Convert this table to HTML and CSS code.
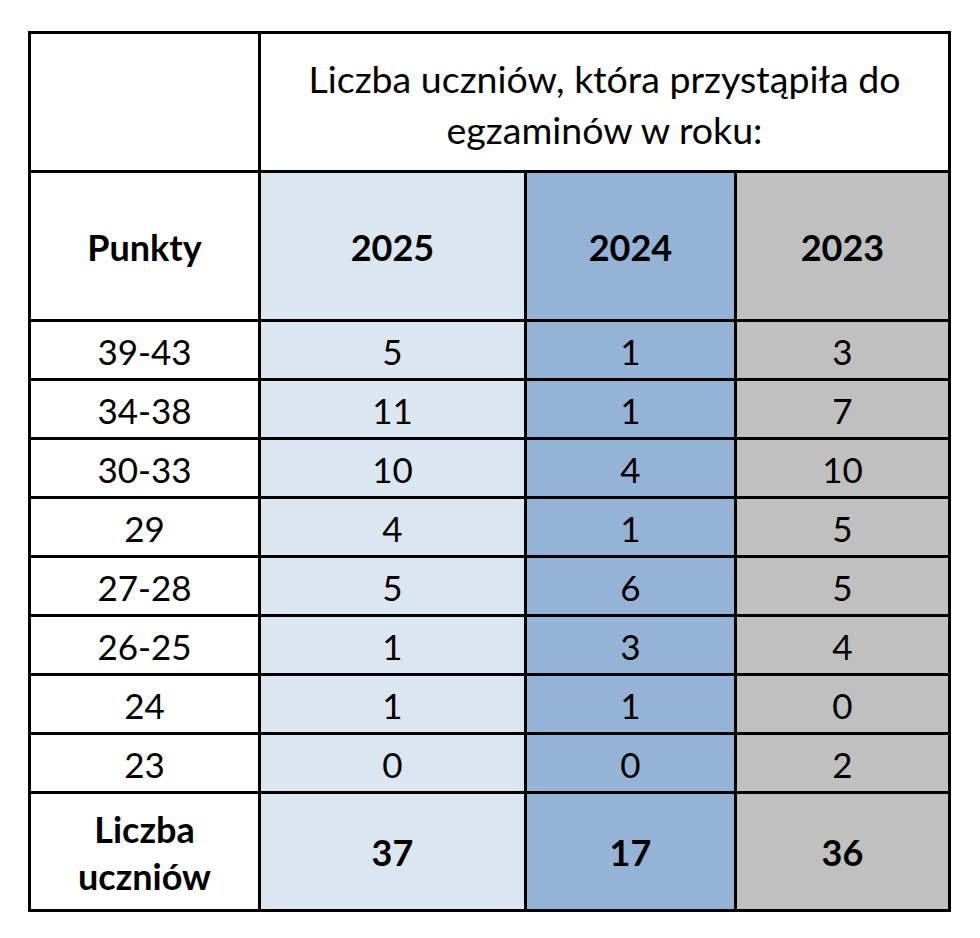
FILE: index.html
```html
<!DOCTYPE html>
<html lang="pl">
<head>
<meta charset="utf-8">
<title>Liczba uczniów</title>
<link rel="stylesheet" href="styles.css">
</head>
<body>
<div class="page">
  <div class="table">
    <div class="cell blank r-title"></div>
    <div class="cell title r-title span3">Liczba uczniów, która przystąpiła do<br>egzaminów w roku:</div>

    <div class="cell head r-head">Punkty</div>
    <div class="cell head r-head c25">2025</div>
    <div class="cell head r-head c24">2024</div>
    <div class="cell head r-head c23 last">2023</div>

    <div class="cell">39-43</div><div class="cell c25">5</div><div class="cell c24">1</div><div class="cell c23 last">3</div>
    <div class="cell">34-38</div><div class="cell c25">11</div><div class="cell c24">1</div><div class="cell c23 last">7</div>
    <div class="cell">30-33</div><div class="cell c25">10</div><div class="cell c24">4</div><div class="cell c23 last">10</div>
    <div class="cell">29</div><div class="cell c25">4</div><div class="cell c24">1</div><div class="cell c23 last">5</div>
    <div class="cell">27-28</div><div class="cell c25">5</div><div class="cell c24">6</div><div class="cell c23 last">5</div>
    <div class="cell">26-25</div><div class="cell c25">1</div><div class="cell c24">3</div><div class="cell c23 last">4</div>
    <div class="cell">24</div><div class="cell c25">1</div><div class="cell c24">1</div><div class="cell c23 last">0</div>
    <div class="cell">23</div><div class="cell c25">0</div><div class="cell c24">0</div><div class="cell c23 last">2</div>

    <div class="cell head total bottom">Liczba<br>uczniów</div>
    <div class="cell head total bottom c25">37</div>
    <div class="cell head total bottom c24">17</div>
    <div class="cell head total bottom c23 last">36</div>
  </div>
</div>
</body>
</html>
```

FILE: styles.css
```css
html, body {
  margin: 0;
  padding: 0;
  background: #ffffff;
}

.page {
  padding: 31px 0 0 28px;
}

.table {
  box-sizing: border-box;
  width: 923px;
  border: 3px solid #000;
  display: grid;
  grid-template-columns: 230px 266px 210px 211px;
  grid-template-rows: 139px 149px repeat(8, 59px) 115px;
  font-family: Lato, "Liberation Sans", sans-serif;
  color: #000;
  background: #fff;
}

.cell {
  box-sizing: border-box;
  display: flex;
  align-items: center;
  justify-content: center;
  text-align: center;
  border-right: 3px solid #000;
  border-bottom: 3px solid #000;
  font-size: 35px;
  line-height: 40px;
  padding-top: 2px;
}

.cell.last {
  border-right: none;
}

.cell.bottom {
  border-bottom: none;
}

.span3 {
  grid-column: 2 / 5;
  border-right: none;
}

.title {
  font-size: 37.5px;
  line-height: 51px;
  padding-top: 4px;
}

.head {
  font-weight: 700;
  font-size: 36px;
}

.total {
  line-height: 47px;
}

.c25 { background: #dce6f1; }
.c24 { background: #95b3d7; }
.c23 { background: #c0c0c0; }
```
